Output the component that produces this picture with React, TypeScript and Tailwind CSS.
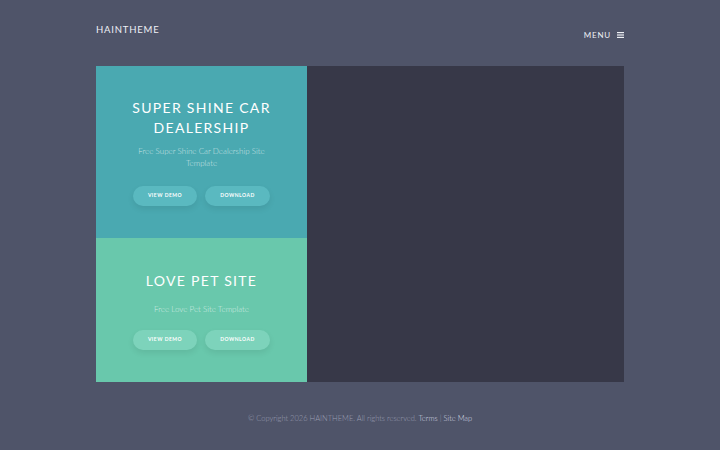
import React from 'react'

const cards = [
  { title: ['SUPER SHINE CAR', 'DEALERSHIP'], sub: ['Free Super Shine Car Dealership Site', 'Template'], bg: 'bg-[#4aa9b1]', h: 'h-[172px]', btn: 'bg-[#5ab9c0]', subMt: 'mt-[7px]', btnMt: 'mt-[17px]' },
  { title: ['LOVE PET SITE'], sub: ['Free Love Pet Site Template'], bg: 'bg-[#69c8ac]', h: 'h-[144px]', btn: 'bg-[#7dd3bb]', subMt: 'mt-[12px]', btnMt: 'mt-[15px]' },
]

export default function App() {
  return (
    <div className="w-[720px] h-[450px] bg-[#4f5469] text-white overflow-hidden" style={{ fontFamily: 'Lato, "Open Sans", sans-serif' }}>
      <div className="w-[528px] mx-auto">
        {/* Header */}
        <div className="flex justify-between items-start h-[66px] pt-[23px]">
          <div className="text-[9.5px] tracking-[0.8px] text-[#eef0f5]">HAINTHEME</div>
          <div className="flex items-center gap-[6px] mt-[6px] text-[8px] tracking-[0.8px] text-[#eef0f5]">
            MENU
            <svg width="7" height="6" viewBox="0 0 7 6" fill="#eef0f5">
              <rect x="0" y="0" width="7" height="1.2" />
              <rect x="0" y="2.4" width="7" height="1.2" />
              <rect x="0" y="4.8" width="7" height="1.2" />
            </svg>
          </div>
        </div>

        {/* Main panel */}
        <div className="flex h-[316px] bg-[#373848]">
          <div className="w-[211px] flex flex-col">
            {cards.map((c, i) => (
              <div key={i} className={`${c.bg} ${c.h} flex flex-col items-center justify-center text-center`}>
                <div className="text-[14px] leading-[20px] tracking-[1.3px] font-normal">
                  {c.title.map(t => <div key={t}>{t}</div>)}
                </div>
                <div className={`${c.subMt} text-[8px] leading-[12px] text-white/70 font-light`}>
                  {c.sub.map(s => <div key={s}>{s}</div>)}
                </div>
                <div className={`flex gap-[8px] ${c.btnMt}`}>
                  <button className={`${c.btn} w-[64px] h-[20px] rounded-full text-[5px] font-bold tracking-[0.5px] shadow-[0_3px_6px_rgba(0,0,0,0.08)]`}>VIEW DEMO</button>
                  <button className={`${c.btn} w-[65px] h-[20px] rounded-full text-[5px] font-bold tracking-[0.5px] shadow-[0_3px_6px_rgba(0,0,0,0.08)]`}>DOWNLOAD</button>
                </div>
              </div>
            ))}
          </div>
          <div className="flex-1" />
        </div>

        {/* Footer */}
        <div className="text-center text-[7.5px] mt-[31px] text-[#9a9eb2] font-light">
          © Copyright 2026 HAINTHEME. All rights reserved. <span className="text-[#d8dbe6]">Terms</span> | <span className="text-[#d8dbe6]">Site Map</span>
        </div>
      </div>
    </div>
  )
}
